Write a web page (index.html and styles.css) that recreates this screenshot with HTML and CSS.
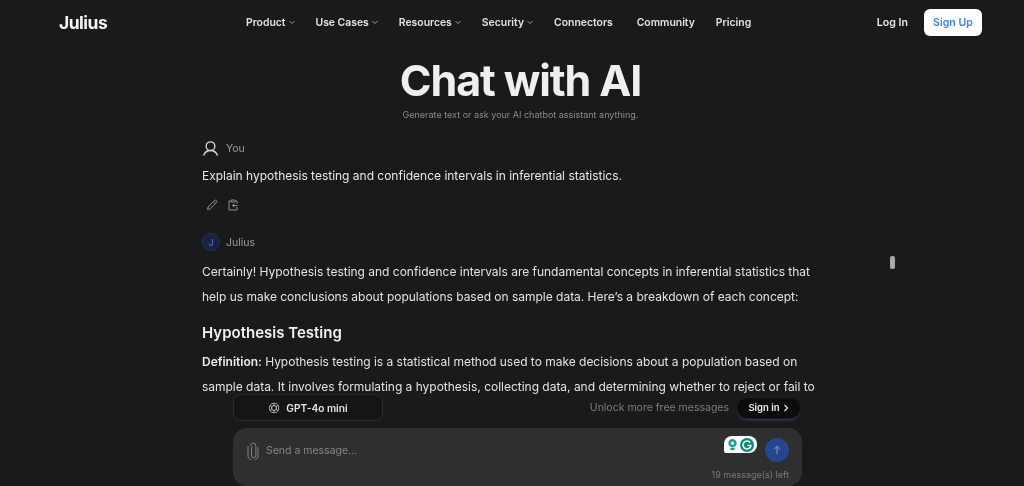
FILE: index.html
```html
<!DOCTYPE html>
<html lang="en">
<head>
<meta charset="utf-8">
<title>Chat with AI - Julius</title>
<link rel="stylesheet" href="styles.css">
</head>
<body>
<header class="topbar">
  <a class="logo">Julius</a>
  <nav class="nav">
    <a class="nav-item">Product <svg class="chev" viewBox="0 0 8 8"><path d="M1.5 3l2.5 2.5L6.5 3"/></svg></a>
    <a class="nav-item">Use Cases <svg class="chev" viewBox="0 0 8 8"><path d="M1.5 3l2.5 2.5L6.5 3"/></svg></a>
    <a class="nav-item">Resources <svg class="chev" viewBox="0 0 8 8"><path d="M1.5 3l2.5 2.5L6.5 3"/></svg></a>
    <a class="nav-item">Security <svg class="chev" viewBox="0 0 8 8"><path d="M1.5 3l2.5 2.5L6.5 3"/></svg></a>
    <a class="nav-item nav-connectors">Connectors</a>
    <a class="nav-item">Community</a>
    <a class="nav-item">Pricing</a>
  </nav>
  <div class="auth">
    <a class="login">Log In</a>
    <a class="signup">Sign Up</a>
  </div>
</header>

<section class="hero">
  <h1 class="hero-title">Chat with AI</h1>
  <p class="hero-sub">Generate text or ask your AI chatbot assistant anything.</p>
</section>

<main class="chat">
  <div class="who">
    <svg class="who-icon" viewBox="0 0 18 18"><circle cx="9" cy="6.5" r="4.6"/><path d="M1.6 16.4c1.3-3.4 4-5.3 7.4-5.3s6.100 1.900 7.400 5.300"/></svg>
    <span>You</span>
  </div>
  <p class="user-msg">Explain hypothesis testing and confidence intervals in inferential statistics.</p>
  <div class="actions">
    <svg class="act" viewBox="0 0 12 12"><path d="M1.500 10.500l.6-2.500L8.500 1.600a1.200 1.200 0 0 1 1.900 1.900L4 9.900z"/><path d="M7.500 2.600l1.900 1.900"/></svg>
    <svg class="act" viewBox="0 0 12 12"><path d="M4 2H2v9h8V8M10 4.500V2H8"/><rect x="4" y="1" width="4" height="2" rx=".5"/><path d="M10.500 6.500H5.500M7.300 4.800L5.500 6.500l1.800 1.700"/></svg>
  </div>
  <div class="who who-ai">
    <span class="avatar">J</span>
    <span>Julius</span>
  </div>
  <p class="para">Certainly! Hypothesis testing and confidence intervals are fundamental concepts in inferential statistics that help us make conclusions about populations based on sample data. Here’s a breakdown of each concept:</p>
  <h2 class="section-title">Hypothesis Testing</h2>
  <p class="para para-def"><strong>Definition:</strong> Hypothesis testing is a statistical method used to make decisions about a population based on sample data. It involves formulating a hypothesis, collecting data, and determining whether to reject or fail to</p>
</main>

<div class="scroll-thumb"></div>

<footer class="dock">
  <div class="dock-top">
    <button class="model">
      <svg class="model-icon" viewBox="0 0 12 12"><circle cx="6" cy="6" r="4.800"/><circle cx="6" cy="6" r="2.600"/><path d="M6 1.200v3M10.100 3.600L7.500 5.100M10.100 8.400L7.500 6.900M6 10.800v-3M1.900 8.400l2.600-1.500M1.900 3.600l2.600 1.500"/></svg>
      GPT-4o mini
    </button>
    <div class="unlock">
      <span>Unlock more free messages</span>
      <a class="signin">Sign in <svg class="signin-chev" viewBox="0 0 6 8"><path d="M1.500 1l3 3-3 3"/></svg></a>
    </div>
  </div>
  <div class="composer">
    <svg class="clip" viewBox="0 0 12 18"><path d="M4 4.500v9a2.200 2.200 0 0 0 4.400 0V3.800a2.700 2.700 0 0 0-5.400 0" transform="translate(0.500 0)"/><path d="M11 5v8.500a5 5 0 0 1-10 0V4" /></svg>
    <span class="placeholder">Send a message...</span>
    <div class="composer-right">
      <div class="composer-row">
        <div class="ext">
          <svg class="ext-bulb" viewBox="0 0 12 14"><circle cx="6" cy="5.500" r="4.500" fill="#12a594"/><circle cx="6" cy="5.500" r="1.800" fill="#fff"/><rect x="3.500" y="10.500" width="5" height="2.500" rx="1" fill="#12a594"/></svg>
          <svg class="ext-g" viewBox="0 0 14 14"><circle cx="7" cy="7" r="7" fill="#0d8a72"/><path d="M10.200 4.500A4 4 0 1 0 11 7.500H7.500" fill="none" stroke="#fff" stroke-width="1.500"/></svg>
        </div>
        <span class="send"><svg class="send-icon" viewBox="0 0 10 10"><path d="M5 9V1.500M2 4.300L5 1.300l3 3"/></svg></span>
      </div>
      <span class="left">19 message(s) left</span>
    </div>
  </div>
</footer>
</body>
</html>
```

FILE: styles.css
```css
* { box-sizing: border-box; }
html, body { height: 100%; }
html { background: #1a1a1a; }
body {
  margin: 0;
  height: 486px;
  overflow: hidden;
  position: relative;
  background: #1a1a1a;
  color: #e4e4e4;
  font-family: Inter, "Liberation Sans", sans-serif;
  filter: blur(0.35px);
}
.topbar {
  height: 44px;
  display: flex;
  align-items: center;
  padding: 0 42px 0 59px;
}
.logo {
  font-size: 17.500px;
  font-weight: 700;
  letter-spacing: -0.5px;
  color: #f4f4f4;
  width: 187px;
}
.nav {
  display: flex;
  align-items: center;
  gap: 21px;
  font-size: 10.400px;
  font-weight: 600;
  color: #e2e2e2;
}
.nav-item { display: flex; align-items: center; gap: 2px; }
.nav-connectors { margin-right: 3px; }
.chev { width: 8px; height: 8px; margin-right: -1px; fill: none; stroke: #aaa; stroke-width: 0.9; }
.auth { margin-left: auto; display: flex; align-items: center; gap: 16px; font-size: 10.600px; font-weight: 600; }
.login { color: #e8e8e8; }
.signup {
  background: #fff;
  color: #3b82f6;
  width: 58px;
  height: 27px;
  border-radius: 6px;
  display: flex;
  align-items: center;
  justify-content: center;
}
.hero { text-align: center; padding-left: 17px; }
.hero-title {
  margin: 11px 0 0;
  font-size: 43px;
  line-height: 50px;
  font-weight: 700;
  letter-spacing: -1.100px;
  color: #efefef;
}
.hero-sub { margin: 4px 0 0; font-size: 9px; line-height: 12px; color: #8a8a8a; }
.chat { margin-left: 202px; width: 620px; padding-top: 18px; }
.who { display: flex; align-items: center; gap: 7px; height: 18px; font-size: 10.500px; color: #9a9a9a; }
.who-icon { width: 17px; height: 17px; fill: none; stroke: #d8d8d8; stroke-width: 1.400; }
.user-msg { margin: 9px 0 0; font-size: 12px; line-height: 20px; letter-spacing: -0.01px; color: #e8e8e8; }
.actions { display: flex; gap: 9px; margin: 12px 0 0 4px; height: 13px; align-items: center; }
.act { width: 12px; height: 12px; fill: none; stroke: #909090; stroke-width: 1; }
.who-ai { margin-top: 22px; gap: 6px; }
.avatar {
  width: 18px; height: 18px; border-radius: 50%;
  background: #18233f; border: 1px solid #1f3163;
  color: #3f66cc; font-size: 9px; font-weight: 600;
  display: flex; align-items: center; justify-content: center;
}
.para { margin: 8px 0 0; font-size: 12px; line-height: 25px; letter-spacing: -0.015px; color: #e2e2e2; }
.para-def { margin-top: 4px; }
.para strong { font-weight: 600; color: #ececec; }
.section-title { margin: 12px 0 0; font-size: 15px; line-height: 24px; font-weight: 600; color: #f0f0f0; }
.scroll-thumb {
  position: absolute; left: 890px; top: 256px;
  width: 5px; height: 13px; border-radius: 2px; background: #a8a8a8;
}
.dock { position: absolute; left: 233px; top: 394px; width: 569px; }
.dock-top { display: flex; align-items: center; justify-content: space-between; height: 27px; }
.model {
  width: 150px; height: 27px;
  background: #151515; border: 1px solid #2c2c2c; border-radius: 8px;
  color: #e4e4e4; font: 600 10.200px Inter, sans-serif;
  display: flex; align-items: center; justify-content: center; gap: 6px;
}
.model-icon { width: 12px; height: 12px; fill: none; stroke: #c8c8c8; stroke-width: 0.800; }
.unlock { display: flex; align-items: center; gap: 7px; padding-right: 1px; font-size: 10.500px; color: #7c7c7c; }
.signin {
  width: 65px; height: 22px; border-radius: 11px; background: #0c0c0c; border: 1px solid #1e1e1e;
  box-shadow: 0 3px 3px -2px #26447f;
  color: #ececec; font-size: 9.500px; font-weight: 600;
  display: flex; align-items: center; justify-content: center; gap: 3px;
}
.signin-chev { width: 6px; height: 8px; fill: none; stroke: #ececec; stroke-width: 1.100; }
.composer {
  height: 58px; margin-top: 7px; background: #2f2f2f; border-radius: 14px;
  display: flex; align-items: flex-start; padding: 0 13px 0 14px;
}
.clip { width: 12px; height: 18px; margin-top: 14px; fill: none; stroke: #8a8a8a; stroke-width: 0.900; }
.placeholder { margin: 16px 0 0 7px; font-size: 10.500px; line-height: 13px; color: #858585; }
.composer-right { margin-left: auto; display: flex; flex-direction: column; align-items: flex-end; }
.composer-row { display: flex; align-items: flex-start; gap: 8px; margin-top: 10px; }
.ext {
  width: 33px; height: 17px; margin-top: -2px; background: #fff; border-radius: 8px 8px 8px 2px;
  display: flex; align-items: center; justify-content: center; gap: 2px;
}
.ext-bulb { width: 11px; height: 13px; }
.ext-g { width: 14px; height: 14px; }
.send {
  width: 24px; height: 24px; border-radius: 50%; background: #25468f;
  display: flex; align-items: center; justify-content: center;
}
.send-icon { width: 10px; height: 10px; fill: none; stroke: #8f9fc4; stroke-width: 1; }
.left { margin-top: 7px; font-size: 9px; line-height: 11px; color: #777; }
```
